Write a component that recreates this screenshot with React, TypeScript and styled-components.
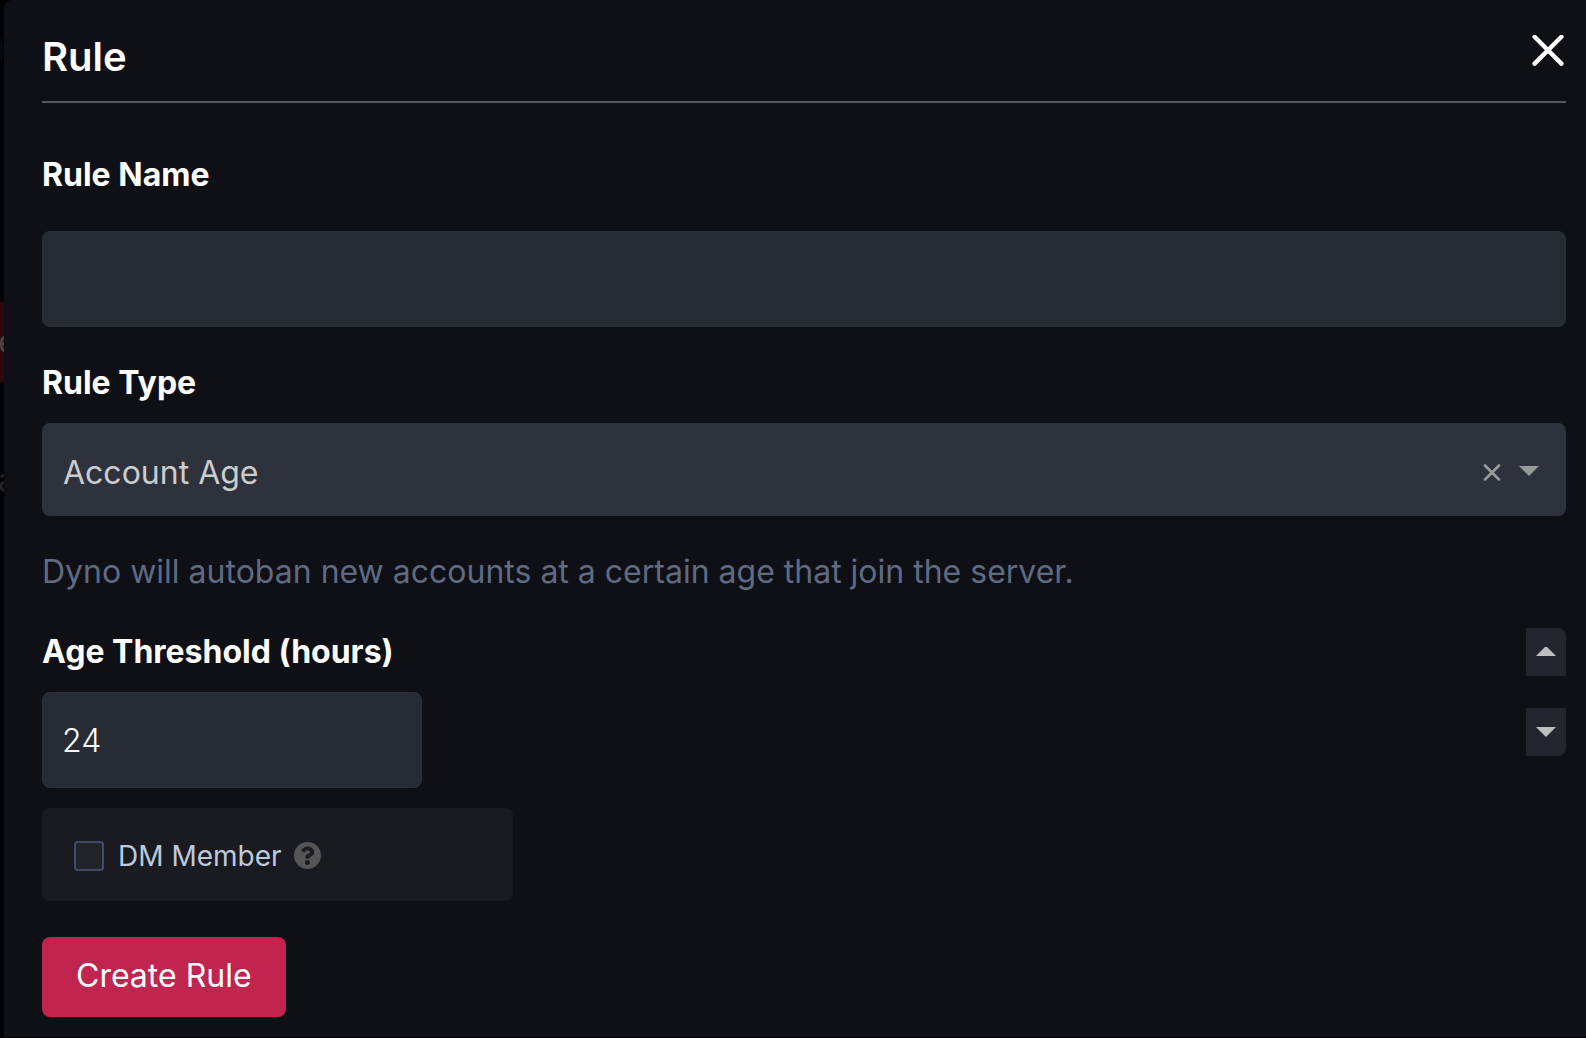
import React, { useState } from "react";
import styled, { createGlobalStyle } from "styled-components";

const GlobalStyle = createGlobalStyle`
  *, *::before, *::after { box-sizing: border-box; }
  body {
    margin: 0;
    background: #020204;
    color: #fff;
    font-family: Inter, "Liberation Sans", sans-serif;
    font-size: 32px;
    line-height: 40px;
    -webkit-font-smoothing: antialiased;
  }
  button, input, select { font: inherit; color: inherit; margin: 0; }
  button { cursor: pointer; }
  svg { display: block; }
`;

const Screen = styled.div`
  display: flex;
`;

const Backdrop = styled.div`
  flex: 0 0 4px;
  width: 4px;
  overflow: hidden;
  display: flex;
  flex-direction: column;
  color: #242529;
  text-indent: -2px;
`;

const BackdropAvatar = styled.div`
  flex: none;
  align-self: flex-end;
  width: 48px;
  height: 48px;
  margin-top: 26px;
  border-radius: 50%;
  background: #08090b;
`;

const BackdropButton = styled.div`
  flex: none;
  height: 80px;
  margin-top: 228px;
  padding: 20px 0;
  background: #2d0811;
  color: #504345;
`;

const BackdropText = styled.div`
  flex: none;
  margin-top: 78px;
`;

const Dialog = styled.section`
  flex: 1;
  min-width: 0;
  padding: 33px 20px 20px 38px;
  border-top-left-radius: 8px;
  background: #0f1015;
`;

const Header = styled.header`
  display: flex;
  justify-content: space-between;
  align-items: flex-start;
  padding-bottom: 20px;
  border-bottom: 2px solid #58585a;
`;

const Title = styled.h1`
  margin: 0;
  font-size: 40px;
  line-height: 48px;
  font-weight: 600;
`;

const IconButton = styled.button<{ $pad?: number }>`
  display: block;
  padding: ${(p) => p.$pad ?? 0}px;
  border: 0;
  background: none;
`;

const Form = styled.form`
  display: flex;
  flex-direction: column;
  align-items: flex-start;
`;

const Field = styled.div<{ $top: number; $gap: number }>`
  display: flex;
  flex-direction: column;
  align-self: stretch;
  gap: ${(p) => p.$gap}px;
  padding-top: ${(p) => p.$top}px;
`;

const Label = styled.label`
  font-weight: 700;
`;

const TextInput = styled.input`
  width: 100%;
  height: 96px;
  padding: 0 19px;
  border: 1px solid #2a3037;
  border-radius: 8px;
  background: #272b33;
  font-weight: 300;
  appearance: textfield;
  &::-webkit-inner-spin-button { appearance: none; }
`;

const SelectBox = styled.div`
  display: flex;
  align-items: center;
  height: 93px;
  padding: 2px 27px 0 21px;
  border-radius: 8px;
  background: #2e323d;
`;

const Select = styled.select`
  flex: 1;
  min-width: 0;
  height: 100%;
  padding: 5px 0 0;
  border: 0;
  outline: 0;
  appearance: none;
  background: none;
  color: #ccc;
`;

const Caret = styled.svg`
  margin-left: 18px;
`;

const Hint = styled.p`
  margin: 36px 0 0;
  color: #5f6b83;
`;

const ThresholdRow = styled.div`
  display: flex;
  align-self: stretch;
  justify-content: space-between;
  align-items: flex-start;
  margin-top: 36px;
`;

const ThresholdField = styled(Field)`
  align-self: auto;
  width: 380px;
`;

const Stepper = styled.div`
  display: flex;
  flex-direction: column;
  gap: 32px;
`;

const StepButton = styled.button<{ $end: "top" | "bottom" }>`
  display: grid;
  place-items: center;
  width: 40px;
  height: 48px;
  padding: 0;
  border: 2px solid #22252b;
  border-radius: ${(p) => (p.$end === "top" ? "0 8px 0 0" : "0 0 8px 0")};
  background: #24262f;
  color: #bfbfc1;
`;

const OptionCard = styled.div`
  display: flex;
  align-items: center;
  width: 471px;
  max-width: 100%;
  height: 93px;
  margin-top: 20px;
  padding: 2px 32px 0;
  border-radius: 8px;
  background: #1a1b20;
  color: #bfc9de;
  font-size: 28px;
`;

const Checkbox = styled.input`
  appearance: none;
  width: 30px;
  height: 30px;
  border: 2px solid #414d68;
  border-radius: 4px;
  background: #222328;
`;

const OptionLabel = styled.label`
  padding: 0 12px 0 14px;
`;

const SubmitButton = styled.button`
  height: 80px;
  margin-top: 36px;
  padding: 0 34px 2px;
  border: 0;
  border-radius: 8px;
  background: #c1244e;
`;

const Triangle = ({ up }: { up?: boolean }) => (
  <svg width="20" height="10" viewBox="0 0 20 10" fill="currentColor" aria-hidden="true">
    <path d={up ? "M0 9 10 -1l10 10z" : "M0 0h20L10 10z"} overflow="visible" />
  </svg>
);

export default function App() {
  const [name, setName] = useState("");
  const [type, setType] = useState("age");
  const [hours, setHours] = useState(24);

  return (
    <>
      <GlobalStyle />
      <Screen>
        <Backdrop aria-hidden="true">
          <BackdropAvatar />
          <BackdropButton>e</BackdropButton>
          <BackdropText>a</BackdropText>
        </Backdrop>
        <Dialog role="dialog" aria-labelledby="title">
          <Header>
            <Title id="title">Rule</Title>
            <IconButton type="button" aria-label="Close" $pad={2}>
              <svg width="32" height="32" viewBox="0 0 32 32" stroke="#fff" strokeWidth="4.4" strokeLinecap="round" aria-hidden="true">
                <path d="M2.600 1.800l26.800 26.800M29.400 1.800L2.600 28.600" />
              </svg>
            </IconButton>
          </Header>
          <Form onSubmit={(e) => e.preventDefault()}>
            <Field $top={52} $gap={36}>
              <Label htmlFor="name">Rule Name</Label>
              <TextInput id="name" type="text" value={name} onChange={(e) => setName(e.target.value)} />
            </Field>
            <Field $top={36} $gap={20}>
              <Label htmlFor="type">Rule Type</Label>
              <SelectBox>
                <Select id="type" value={type} onChange={(e) => setType(e.target.value)}>
                  <option value="" />
                  <option value="age">Account Age</option>
                </Select>
                <IconButton type="button" aria-label="Clear rule type" onClick={() => setType("")}>
                  <svg width="18" height="20" viewBox="0 0 18 20" stroke="#9b9b9d" strokeWidth="2.6" strokeLinecap="round" aria-hidden="true">
                    <path d="M2 4.500l14 14M16 4.500L2 18.500" />
                  </svg>
                </IconButton>
                <Caret width="20" height="10" viewBox="0 0 20 10" fill="#999" aria-hidden="true">
                  <path d="M0 0h20L10 10z" />
                </Caret>
              </SelectBox>
            </Field>
            <Hint>Dyno will autoban new accounts at a certain age that join the server.</Hint>
            <ThresholdRow>
              <ThresholdField $top={4} $gap={20}>
                <Label htmlFor="hours">Age Threshold (hours)</Label>
                <TextInput id="hours" type="number" value={hours} onChange={(e) => setHours(Number(e.target.value))} />
              </ThresholdField>
              <Stepper>
                <StepButton type="button" $end="top" aria-label="Increase" onClick={() => setHours(hours + 1)}>
                  <Triangle up />
                </StepButton>
                <StepButton type="button" $end="bottom" aria-label="Decrease" onClick={() => setHours(hours - 1)}>
                  <Triangle />
                </StepButton>
              </Stepper>
            </ThresholdRow>
            <OptionCard>
              <Checkbox id="dm" type="checkbox" />
              <OptionLabel htmlFor="dm">DM Member</OptionLabel>
              <IconButton type="button" aria-label="About DM Member">
                <svg width="27" height="27" viewBox="8 8 496 496" fill="#555" aria-hidden="true">
                  <path d="M504 256c0 136.997-111.043 248-248 248S8 392.997 8 256C8 119.083 119.043 8 256 8s248 111.083 248 248zM262.655 90c-54.497 0-89.255 22.957-116.549 63.758-3.536 5.286-2.353 12.415 2.715 16.258l34.699 26.310c5.205 3.947 12.621 3.008 16.665-2.122 17.864-22.658 30.113-35.797 57.303-35.797 20.429 0 45.698 13.148 45.698 32.958 0 14.976-12.363 22.667-32.534 33.976C247.128 238.528 216 254.941 216 296v4c0 6.627 5.373 12 12 12h56c6.627 0 12-5.373 12-12v-1.333c0-28.462 83.186-29.647 83.186-106.667 0-58.002-60.165-102-116.531-102zM256 338c-25.365 0-46 20.635-46 46 0 25.364 20.635 46 46 46s46-20.636 46-46c0-25.365-20.635-46-46-46z" />
                </svg>
              </IconButton>
            </OptionCard>
            <SubmitButton type="submit">Create Rule</SubmitButton>
          </Form>
        </Dialog>
      </Screen>
    </>
  );
}
